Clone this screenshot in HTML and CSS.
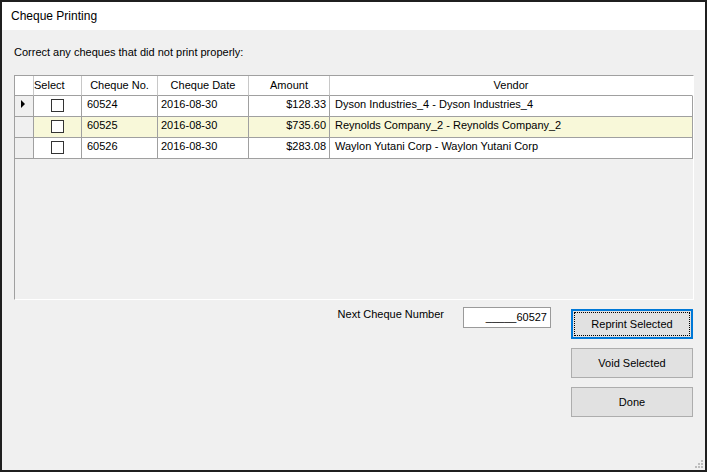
FILE: index.html
```html
<!DOCTYPE html>
<html>
<head>
<meta charset="utf-8">
<title>Cheque Printing</title>
<link rel="stylesheet" href="styles.css">
</head>
<body>
<div class="window">
  <div class="titlebar">Cheque Printing</div>
  <div class="content">
    <div class="intro">Correct any cheques that did not print properly:</div>
    <div class="grid">
      <div class="row head">
        <div class="c rh"></div>
        <div class="c sel-h">Select</div>
        <div class="c ctr">Cheque No.</div>
        <div class="c ctr">Cheque Date</div>
        <div class="c ctr">Amount</div>
        <div class="c ctr last">Vendor</div>
      </div>
      <div class="row">
        <div class="c rh"><span class="arrow"></span></div>
        <div class="c chk"><span class="box"></span></div>
        <div class="c num">60524</div>
        <div class="c date">2016-08-30</div>
        <div class="c amt">$128.33</div>
        <div class="c vend last">Dyson Industries_4 - Dyson Industries_4</div>
      </div>
      <div class="row alt">
        <div class="c rh"></div>
        <div class="c chk"><span class="box"></span></div>
        <div class="c num">60525</div>
        <div class="c date">2016-08-30</div>
        <div class="c amt">$735.60</div>
        <div class="c vend last">Reynolds Company_2 - Reynolds Company_2</div>
      </div>
      <div class="row">
        <div class="c rh"></div>
        <div class="c chk"><span class="box"></span></div>
        <div class="c num">60526</div>
        <div class="c date">2016-08-30</div>
        <div class="c amt">$283.08</div>
        <div class="c vend last">Waylon Yutani Corp - Waylon Yutani Corp</div>
      </div>
    </div>
    <div class="bottom">
      <div class="next-label">Next Cheque Number</div>
      <div class="textbox">_____60527</div>
      <div class="buttons">
        <div class="btn focused">Reprint Selected</div>
        <div class="btn">Void Selected</div>
        <div class="btn">Done</div>
      </div>
    </div>
  </div>
  <svg class="grip" width="10" height="10" viewBox="0 0 10 10">
    <rect x="7" y="1" width="2" height="2" fill="#bdbdbd"/>
    <rect x="4" y="4" width="2" height="2" fill="#bdbdbd"/>
    <rect x="7" y="4" width="2" height="2" fill="#bdbdbd"/>
    <rect x="1" y="7" width="2" height="2" fill="#bdbdbd"/>
    <rect x="4" y="7" width="2" height="2" fill="#bdbdbd"/>
    <rect x="7" y="7" width="2" height="2" fill="#bdbdbd"/>
  </svg>
</div>
</body>
</html>
```

FILE: styles.css
```css
* { box-sizing: border-box; }
html, body { margin: 0; padding: 0; }
body {
  font-family: "Liberation Sans", Arial, sans-serif;
  color: #000;
  background: #f0f0f0;
}
.window {
  position: relative;
  width: 707px;
  height: 472px;
  border: 2px solid #1f1f1f;
  display: flex;
  flex-direction: column;
  background: #f0f0f0;
}
.titlebar {
  height: 28px;
  background: #fff;
  font-size: 12px;
  line-height: 14px;
  padding: 7px 0 0 9px;
}
.content {
  flex: 1;
  padding: 16px 11px 0 12px;
  font-size: 11px;
  line-height: 13px;
}
.intro { height: 13px; }
.grid {
  margin-top: 16px;
  height: 225px;
  border-top: 1px solid #a0a0a0;
  border-left: 1px solid #a0a0a0;
  border-right: 1px solid #fff;
  border-bottom: 1px solid #fff;
  background: #f0f0f0;
}
.row {
  display: grid;
  grid-template-columns: 19px 48px 76px 91px 81px 363px;
  height: 21px;
  background: #fff;
}
.row.alt { background: #f8f8d9; }
.row.head { height: 20px; background: #fff; }
.c {
  border-right: 1px solid #a0a0a0;
  border-bottom: 1px solid #a0a0a0;
  padding-top: 2px;
  white-space: nowrap;
  overflow: hidden;
}
.head .c {
  border-right-color: #c8c8c8;
  border-bottom-color: #a0a0a0;
  padding-top: 3px;
}
.head .c.last { border-right-color: #fff; }
.head .rh { background: #fff; }
.ctr { text-align: center; }
.sel-h { padding-left: 0; text-align: left; }
.rh {
  background: #f0f0f0;
  display: flex;
  align-items: flex-start;
  padding-left: 6px;
  padding-top: 4px;
}
.arrow {
  width: 0;
  height: 0;
  border-left: 4px solid #000;
  border-top: 4.5px solid transparent;
  border-bottom: 4.5px solid transparent;
}
.chk {
  display: flex;
  justify-content: center;
  padding-top: 3px;
  padding-right: 1px;
}
.box {
  width: 13px;
  height: 13px;
  border: 1px solid #333;
  background: #fff;
}
.num { padding-left: 5px; }
.date { padding-left: 3px; }
.amt { text-align: right; padding-right: 3px; }
.vend { padding-left: 5px; }
.bottom {
  display: flex;
  justify-content: flex-end;
  align-items: flex-start;
  padding-right: 1px;
}
.next-label {
  margin-top: 8px;
  margin-right: 19px;
}
.textbox {
  margin-top: 7px;
  margin-right: 20px;
  width: 88px;
  height: 21px;
  border: 1px solid #9a9a9a;
  background: #fff;
  text-align: right;
  padding-right: 3px;
  line-height: 19px;
}
.buttons {
  margin-top: 9px;
  display: flex;
  flex-direction: column;
  gap: 9px;
  width: 122px;
}
.btn {
  position: relative;
  height: 30px;
  border: 1px solid #adadad;
  background: #e1e1e1;
  display: flex;
  align-items: center;
  justify-content: center;
  font-size: 11px;
}
.btn.focused { border: 2px solid #0078d7; }
.btn.focused::after {
  content: "";
  position: absolute;
  inset: 1px;
  border: 1px dotted #000;
}
.grip {
  position: absolute;
  right: 1px;
  bottom: 1px;
}
```
